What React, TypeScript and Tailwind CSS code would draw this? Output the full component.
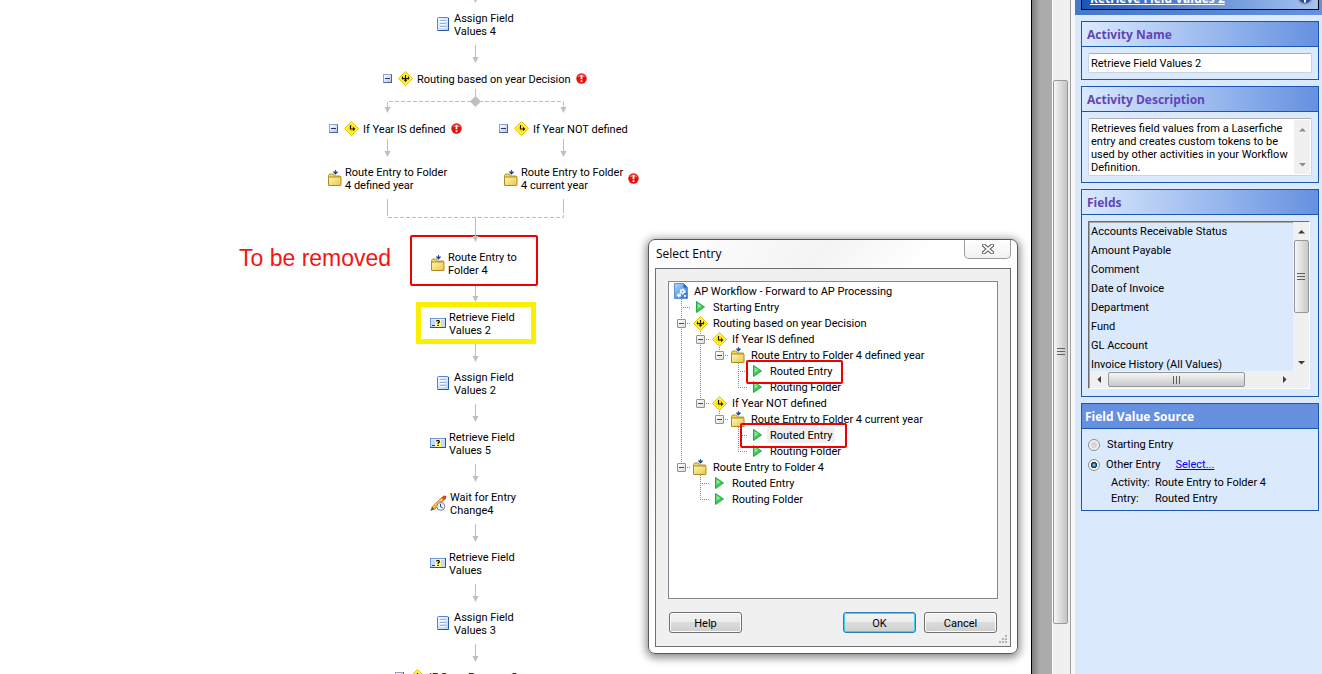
import type { ReactNode } from 'react';

function AssignIcon() {
  return (
    <svg width="14" height="15" viewBox="0 0 14 15" className="shrink-0">
      <defs>
        <linearGradient id="assign" x1="0" y1="0" x2="1" y2="1">
          <stop offset="0" stopColor="#f4faff" />
          <stop offset="1" stopColor="#b5d3f8" />
        </linearGradient>
      </defs>
      <rect x="0.5" y="0.5" width="11" height="13" rx="1" fill="url(#assign)" stroke="#5b86c4" />
      <path d="M0.5 13.500h11V1" stroke="#2f5a9e" fill="none" />
      <path d="M3 3.500h6M3 6.500h6M3 9.500h6" stroke="#8fb3e2" />
      <path d="M3.500 4.500h5M3.500 7.500h5M3.500 10.500h5" stroke="#fff" />
    </svg>
  );
}

function RetrieveIcon() {
  return (
    <svg width="16" height="10" viewBox="0 0 16 10" className="shrink-0">
      <rect x="0.5" y="0.5" width="15" height="9" fill="#c2dcfa" stroke="#6f9ad6" />
      <path d="M0 9.500h15.500V0" stroke="#2c529a" fill="none" />
      <path d="M1.500 1.500h13" stroke="#eaf4ff" />
      <path d="M2 7.500h3" stroke="#24407c" />
      <rect x="5" y="1" width="6" height="8" fill="#fff78a" />
      <path d="M6.500 3.400C6.600 2.200 9.400 2.100 9.300 3.600 9.200 4.500 8 4.500 8 5.800" stroke="#000" strokeWidth="1.200" fill="none" />
      <rect x="7.400" y="6.800" width="1.300" height="1.200" fill="#000" />
    </svg>
  );
}

function FolderIcon() {
  return (
    <svg width="14" height="16" viewBox="0 0 14 16" className="shrink-0">
      <defs>
        <linearGradient id="folder" x1="0" y1="0" x2="1" y2="1">
          <stop offset="0" stopColor="#fff7b0" />
          <stop offset="1" stopColor="#e6c84a" />
        </linearGradient>
      </defs>
      <path d="M0.500 5.500l1-1.500h4l1 2h6v9h-12z" fill="#f0d765" stroke="#b8932c" />
      <rect x="0.500" y="7" width="12.500" height="8.500" rx="0.500" fill="url(#folder)" stroke="#b08a20" />
      <path d="M7.500 0v2M5.500 1.500h1M8.500 1.500h1" stroke="#2850b0" />
      <path d="M5 2h5L7.500 4.800z" fill="#1c3f9c" />
    </svg>
  );
}

// Yellow road-sign diamond; `split` draws the three-way arrow of a decision
function SignIcon({ split = false }: { split?: boolean }) {
  return (
    <svg width="15" height="15" viewBox="0 0 15 15" className="shrink-0">
      <path d="M7.500 0.500l7 7-7 7-7-7z" fill="#ffee2e" stroke="#e6c800" />
      <path d="M7.500 2.500l5 5-5 5-5-5z" fill="#ffe100" stroke="#fff98c" strokeWidth="0.700" />
      {split ? (
        <>
          <path d="M7.500 4v6M4.500 5.500v2h6v-2" stroke="#1a1600" fill="none" />
          <path d="M5.500 8.500h4L7.500 11zM3.400 7.500L5 6.200v2.600zM11.600 7.500L10 6.200v2.600z" fill="#1a1600" />
        </>
      ) : (
        <>
          <path d="M6.500 4v4h3.500" stroke="#1a1600" strokeWidth="1.100" fill="none" />
          <path d="M9 5.800L11.400 8 9 10.200z" fill="#1a1600" />
        </>
      )}
    </svg>
  );
}

function WaitIcon() {
  return (
    <svg width="17" height="17" viewBox="0 0 17 17" className="shrink-0">
      <path d="M0.500 16l1.500-4.500 2.600 2.800z" fill="#6b4a2a" />
      <path d="M2 11.700L11.500 2.600l2.600 2.600-9.500 9.300z" fill="#f5a623" stroke="#c1660c" strokeWidth="0.600" />
      <path d="M3.200 12.200l9.200-8.800" stroke="#ffe08a" strokeWidth="1" />
      <path d="M11.500 2.600L13.800 0.600 16.300 1 16 3.400 14.100 5.200z" fill="#e2402c" />
      <circle cx="10.800" cy="11.400" r="4" fill="#eef2fa" stroke="#7587a8" />
      <path d="M10.500 8.800v3l2.200 1.200" stroke="#33415f" fill="none" />
    </svg>
  );
}

function WorkflowIcon() {
  return (
    <svg width="14" height="16" viewBox="0 0 14 16" className="shrink-0">
      <defs>
        <linearGradient id="page" x1="0" y1="0" x2="1" y2="1">
          <stop offset="0" stopColor="#b9d8fa" />
          <stop offset="0.600" stopColor="#5b9be6" />
          <stop offset="1" stopColor="#1d63c4" />
        </linearGradient>
      </defs>
      <path d="M0.500 0.500h9l4 4v11h-13z" fill="url(#page)" stroke="#5a93da" />
      <path d="M9.500 0.500v4h4z" fill="#1f5fbe" />
      <circle cx="8.500" cy="8.500" r="2.200" fill="#fff" stroke="#fff" strokeWidth="1.800" strokeDasharray="1.300 1" />
      <circle cx="8.500" cy="8.500" r="0.900" fill="#5b9be6" />
      <circle cx="5" cy="12.300" r="1.400" fill="#fff" stroke="#fff" strokeWidth="1.400" strokeDasharray="1 0.700" />
      <circle cx="11" cy="13" r="1.200" fill="#e6f1ff" />
    </svg>
  );
}

function PlayIcon() {
  return (
    <svg width="9" height="12" viewBox="0 0 9 12" className="shrink-0">
      <path d="M0.500 0.500L8.500 6 0.500 11.500z" fill="#3ccb58" stroke="#27a845" strokeLinejoin="round" />
      <path d="M1.500 2.300v5.500L5.500 5z" fill="#8ae89a" />
    </svg>
  );
}

function ErrorIcon() {
  return (
    <svg width="11" height="11" viewBox="0 0 11 11" className="shrink-0">
      <circle cx="5.500" cy="5.500" r="5.200" fill="#e3120b" />
      <path d="M1.500 4a4.300 4.300 0 018 0z" fill="#f4625a" />
      <path d="M5.500 2v4.200M5.500 7.300v1.600" stroke="#fff" strokeWidth="1.700" />
    </svg>
  );
}

function Collapse() {
  return (
    <button
      aria-label="Collapse"
      className="grid size-[9px] shrink-0 place-items-center border border-[#8ea0c4] border-b-[#4a6294] border-r-[#4a6294] bg-linear-to-br from-white to-[#b9c8e4]"
    >
      <span className="h-px w-[5px] bg-[#223a70]" />
    </button>
  );
}

/* ---------- workflow canvas ---------- */

const ARROWS = [
  [475, 45, 63],
  [387, 139, 157],
  [563, 139, 157],
  [475, 217, 242],
  [475, 286, 302],
  [475, 344, 362],
  [475, 404, 422],
  [475, 464, 482],
  [475, 524, 542],
  [475, 584, 602],
  [475, 644, 662],
  [475, -10, 3],
  [387, 106, 113],
  [563, 106, 113],
];

function Connectors() {
  return (
    <svg className="absolute inset-0 size-full" fill="none" stroke="#bfbfbf">
      {ARROWS.map(([x, from, to]) => (
        <g key={`${x}-${from}`}>
          <path d={`M${x + 0.5} ${from}V${to - 5}`} />
          <path d={`M${x - 2.5} ${to - 6}h6l-3 6z`} fill="#bfbfbf" stroke="none" />
        </g>
      ))}
      <path d="M475.500 89v8M387.500 199v13M563.500 199v13" />
      <path d="M387.500 106v-4.500h176v4.500M387.500 212v5.500h176V212" strokeDasharray="4 2" />
      <path d="M475.500 96l5.500 5.500-5.500 5.500-5.500-5.500z" fill="#bfbfbf" stroke="none" />
    </svg>
  );
}

function Node({ x, y, icon, lines, error }: { x: number; y: number; icon: ReactNode; lines: string[]; error?: boolean }) {
  return (
    <div className="absolute flex items-center gap-[3px] whitespace-nowrap leading-[13px]" style={{ left: x, top: y }}>
      <span className="pb-0.5">{icon}</span>
      <span>
        {lines.map((line) => (
          <span key={line} className="block">{line}</span>
        ))}
      </span>
      {error && <span className="pb-0.5 pl-0.5"><ErrorIcon /></span>}
    </div>
  );
}

function Branch({ x, y, label, split, error }: { x: number; y: number; label: string; split?: boolean; error?: boolean }) {
  return (
    <div className="absolute flex items-center gap-1 whitespace-nowrap leading-[13px]" style={{ left: x, top: y }}>
      <span className="pr-0.5"><Collapse /></span>
      <SignIcon split={split} />
      <span className="pt-0.5">{label}</span>
      {error && <span className="pl-px"><ErrorIcon /></span>}
    </div>
  );
}

function Canvas() {
  return (
    <main className="relative min-w-0 flex-1 overflow-hidden bg-white">
      <div className="absolute left-[416px] top-[302px] h-[42px] w-[120px] bg-[repeating-conic-gradient(#ffe600_0_25%,#fff500_0_50%)] bg-size-[2px_2px] p-[5px]">
        <div className="size-full bg-white" />
      </div>
      <div className="absolute left-[410px] top-[235px] h-[51px] w-[128px] rounded-xs border-2 border-[#f00000]" />
      <Connectors />

      <Node x={437} y={12} icon={<AssignIcon />} lines={['Assign Field', 'Values 4']} />
      <Branch x={383} y={71} label="Routing based on year Decision" split error />
      <Branch x={329} y={121} label="If Year IS defined" error />
      <Branch x={499} y={121} label="If Year NOT defined" />
      <Node x={328} y={166} icon={<FolderIcon />} lines={['Route Entry to Folder', '4 defined year']} />
      <Node x={504} y={166} icon={<FolderIcon />} lines={['Route Entry to Folder', '4 current year']} error />
      <Node x={431} y={251} icon={<FolderIcon />} lines={['Route Entry to', 'Folder 4']} />
      <Node x={430} y={311} icon={<RetrieveIcon />} lines={['Retrieve Field', 'Values 2']} />
      <Node x={437} y={371} icon={<AssignIcon />} lines={['Assign Field', 'Values 2']} />
      <Node x={430} y={431} icon={<RetrieveIcon />} lines={['Retrieve Field', 'Values 5']} />
      <Node x={430} y={491} icon={<WaitIcon />} lines={['Wait for Entry', 'Change4']} />
      <Node x={430} y={551} icon={<RetrieveIcon />} lines={['Retrieve Field', 'Values']} />
      <Node x={437} y={611} icon={<AssignIcon />} lines={['Assign Field', 'Values 3']} />
      <Branch x={395} y={669} label="IF Scan Process C" split />

      <p className="absolute left-[239px] top-[242px] whitespace-nowrap font-['Liberation_Sans',Arial,sans-serif] text-[23px] leading-8 text-[#f41414]">
        To be removed
      </p>
      <SelectEntryDialog />
    </main>
  );
}

/* ---------- select entry dialog ---------- */

type TreeRow = {
  label: string;
  icon: ReactNode;
  // one letter per column left of the icon: l(ine), t(ee), e(nd) or blank
  cols: string;
  open?: boolean;
  selected?: boolean;
};

const TREE: TreeRow[] = [
  { label: 'AP Workflow - Forward to AP Processing', icon: <WorkflowIcon />, cols: '' },
  { label: 'Starting Entry', icon: <PlayIcon />, cols: 't' },
  { label: 'Routing based on year Decision', icon: <SignIcon split />, cols: 't', open: true },
  { label: 'If Year IS defined', icon: <SignIcon />, cols: 'lt', open: true },
  { label: 'Route Entry to Folder 4 defined year', icon: <FolderIcon />, cols: 'lle', open: true },
  { label: 'Routed Entry', icon: <PlayIcon />, cols: 'll t' },
  { label: 'Routing Folder', icon: <PlayIcon />, cols: 'll e' },
  { label: 'If Year NOT defined', icon: <SignIcon />, cols: 'le', open: true },
  { label: 'Route Entry to Folder 4 current year', icon: <FolderIcon />, cols: 'l e', open: true },
  { label: 'Routed Entry', icon: <PlayIcon />, cols: 'l  t', selected: true },
  { label: 'Routing Folder', icon: <PlayIcon />, cols: 'l  e' },
  { label: 'Route Entry to Folder 4', icon: <FolderIcon />, cols: 'e', open: true },
  { label: 'Routed Entry', icon: <PlayIcon />, cols: ' t' },
  { label: 'Routing Folder', icon: <PlayIcon />, cols: ' e' },
];

function TreeCol({ kind, open }: { kind: string; open?: boolean }) {
  return (
    <span className="relative h-4 w-[19px] shrink-0">
      <svg width="19" height="16" className="block" stroke="#8a8a8a" strokeDasharray="1 1">
        {kind !== ' ' && <path d={kind === 'e' ? 'M9.500 0V8' : 'M9.500 0V16'} />}
        {(kind === 't' || kind === 'e') && <path d="M9 8.500H21" />}
      </svg>
      {open && (
        <button
          aria-label="Collapse"
          className="absolute left-[5px] top-1 grid size-[9px] place-items-center rounded-[1px] border border-[#919191] bg-linear-to-br from-white to-[#dedede]"
        >
          <span className="h-px w-[5px] bg-[#2c4a9a]" />
        </button>
      )}
    </span>
  );
}

function EntryTree() {
  return (
    <div className="relative min-h-0 flex-1 border border-[#828790] bg-white pl-[3px] pt-px">
      <ul>
        {TREE.map((row, i) => {
          const last = row.cols.length - 1;
          return (
            <li key={i} className="flex h-4 items-center whitespace-nowrap">
              {row.cols.split('').map((kind, c) => (
                <TreeCol key={c} kind={kind} open={row.open && c === last} />
              ))}
              <span className="grid w-[19px] shrink-0 place-items-center pr-px">{row.icon}</span>
              <span className={`h-4 px-[3px] leading-[18px] ${row.selected ? 'bg-[#f0f0f0]' : ''}`}>{row.label}</span>
            </li>
          );
        })}
      </ul>
      <div className="absolute left-[77px] top-[78px] h-6 w-[97px] rounded-xs border-2 border-[#f00000]" />
      <div className="absolute left-[71px] top-[141px] h-[25px] w-[107px] rounded-xs border-2 border-[#f00000]" />
    </div>
  );
}

function DialogButton({ children, primary }: { children: ReactNode; primary?: boolean }) {
  return (
    <button
      className={`h-[21px] w-[73px] rounded-[3px] border bg-[linear-gradient(#f3f3f3,#ebebeb_50%,#dcdcdc_50%,#cfcfcf)] pt-px leading-none ${
        primary
          ? 'border-[#2c7fb5] shadow-[inset_0_0_0_1px_#45cdf5]'
          : 'border-[#707070] shadow-[inset_0_0_0_1px_#fcfcfc]'
      }`}
    >
      {children}
    </button>
  );
}

function SelectEntryDialog() {
  return (
    <div
      role="dialog"
      aria-label="Select Entry"
      className="absolute left-[648px] top-[239px] flex h-[415px] w-[370px] flex-col rounded-[7px] border border-[#55585c] bg-linear-to-br from-white via-[#f4f4f4] via-25% to-white to-40% px-1.5 pb-1.5 shadow-[0_2px_9px_2px_rgba(0,0,0,0.45)]"
    >
      <div className="flex h-7 shrink-0 items-start justify-between">
        <h2 className="pl-px pt-[5px] font-['Open_Sans','Noto_Sans',sans-serif] text-xs leading-[18px]">Select Entry</h2>
        <button
          aria-label="Close"
          className="grid h-[19px] w-[47px] place-items-center rounded-b-[5px] border border-t-0 border-[#9a9c9f] bg-linear-to-b from-white to-[#f2f2f2]"
        >
          <svg width="12" height="10" viewBox="0 0 12 10" fill="none">
            <path d="M2 1.500l8 7M10 1.500l-8 7" stroke="#55565c" strokeWidth="3.800" strokeLinecap="square" />
            <path d="M2 1.500l8 7M10 1.500l-8 7" stroke="#fff" strokeWidth="1.800" strokeLinecap="square" />
          </svg>
        </button>
      </div>
      <div className="relative flex min-h-0 flex-1 flex-col border border-[#6d6f73] bg-[#f0f0f0] p-3">
        <EntryTree />
        <div className="flex gap-2 px-px pb-px pt-[13px]">
          <DialogButton>Help</DialogButton>
          <span className="flex-1" />
          <DialogButton primary>OK</DialogButton>
          <DialogButton>Cancel</DialogButton>
        </div>
        <svg width="9" height="9" className="absolute bottom-0.5 right-0.5" fill="#b4b4b4">
          <path d="M6 0h2v2H6zM3 3h2v2H3zM6 3h2v2H6zM0 6h2v2H0zM3 6h2v2H3zM6 6h2v2H6z" />
        </svg>
      </div>
    </div>
  );
}

/* ---------- properties panel ---------- */

function Arrow({ dir, muted }: { dir: 'up' | 'down' | 'left' | 'right'; muted?: boolean }) {
  const d = { up: 'M0 5.500h7L3.500 2z', down: 'M0 2h7L3.500 5.500z', left: 'M5 0v7L1.500 3.500z', right: 'M2 0v7L5.500 3.500z' }[dir];
  return (
    <svg width="7" height="7" viewBox="0 0 7 7" className="shrink-0">
      <path d={d} fill={muted ? '#8d8d8d' : '#3c3c3c'} />
    </svg>
  );
}

function Grip({ vertical }: { vertical?: boolean }) {
  return (
    <svg width="8" height="8" viewBox="0 0 8 8" stroke="#5f6165">
      <path d={vertical ? 'M0 0.500h8M0 3.500h8M0 6.500h8' : 'M0.500 0v8M3.500 0v8M6.500 0v8'} />
    </svg>
  );
}

function Section({ title, solid, children }: { title: string; solid?: boolean; children: ReactNode }) {
  return (
    <section className="border border-[#1c56b4]">
      <h3
        className={`h-[25px] border-b border-[#1c56b4] font-['Open_Sans','Noto_Sans',sans-serif] text-xs font-bold leading-[26px] ${
          solid ? 'bg-[#6691e0] pl-[3px] text-white' : 'bg-linear-to-r from-[#dbe9fd] to-[#6691e0] pl-[5px] text-[#5f45b5]'
        }`}
      >
        {title}
      </h3>
      {children}
    </section>
  );
}

const FIELDS = [
  'Accounts Receivable Status',
  'Amount Payable',
  'Comment',
  'Date of Invoice',
  'Department',
  'Fund',
  'GL Account',
  'Invoice History (All Values)',
];

function FieldList() {
  return (
    <div className="mb-[7px] ml-1.5 mr-2 mt-1.5 grid h-[168px] grid-cols-[1fr_16px] grid-rows-[1fr_17px] border border-b-white border-l-[#6d6d6d] border-r-white border-t-[#6d6d6d]">
      <ul className="overflow-hidden border-l border-t border-[#a8a8a8] pl-px">
        {FIELDS.map((field) => (
          <li key={field} className="h-[19px] whitespace-nowrap leading-[17px]">{field}</li>
        ))}
      </ul>
      <div className="flex flex-col items-center bg-[#f0f0f0]">
        <span className="grid h-[18px] place-items-center"><Arrow dir="up" /></span>
        <span className="grid h-[73px] w-[15px] place-items-center rounded-xs border border-[#979797] bg-linear-to-r from-[#f5f5f5] to-[#c9c9cd]">
          <Grip vertical />
        </span>
        <span className="flex-1" />
        <span className="grid h-[17px] place-items-center"><Arrow dir="down" /></span>
      </div>
      <div className="flex items-center border-l border-[#a8a8a8] bg-[#f0f0f0]">
        <span className="grid w-[18px] place-items-center"><Arrow dir="left" /></span>
        <span className="grid h-[15px] w-[137px] place-items-center rounded-xs border border-[#979797] bg-linear-to-b from-[#f5f5f5] to-[#c9c9cd]">
          <Grip />
        </span>
        <span className="flex-1" />
        <span className="grid w-[18px] place-items-center"><Arrow dir="right" /></span>
      </div>
      <div className="bg-[#f0f0f0]" />
    </div>
  );
}

const RADIO =
  'size-3 shrink-0 appearance-none rounded-full border border-[#8e8f8f] bg-[radial-gradient(circle,#d6d6d6_0_35%,#f4f4f4_60%)] checked:bg-[radial-gradient(circle_at_50%_50%,#6cc6ee_0_8%,#15496b_32%,#0c2c45_40%,#f4f4f4_50%)]';

function PropertiesPanel() {
  return (
    <aside className="flex w-[247px] shrink-0 flex-col overflow-hidden bg-[#dbe9fd]">
      <div className="h-[15px] shrink-0 overflow-hidden bg-linear-to-r from-[#4577cb] to-[#6691e0] pl-1.5 pr-[3px]">
        <div className="-mt-4 flex h-[26px] items-center justify-between border border-black bg-linear-to-r from-[#1c55b5] to-[#a5c3f0] pl-2 pr-1">
          <a
            href="#activity"
            className="pt-1 font-['Open_Sans','Noto_Sans',sans-serif] text-xs font-bold leading-4 text-white underline"
          >
            Retrieve Field Values 2
          </a>
          <svg width="18" height="18" viewBox="0 0 18 18" className="shrink-0">
            <circle cx="9" cy="9" r="7.500" fill="#2450b4" stroke="#a3a8b3" strokeWidth="2" />
            <path d="M9 4v2M9 7.500v7" stroke="#fff" strokeWidth="2" />
          </svg>
        </div>
      </div>

      <div className="flex flex-col gap-1.5 pl-1.5 pr-[3px] pt-1.5">
        <Section title="Activity Name">
          <div className="p-1.5">
            <input
              aria-label="Activity Name"
              defaultValue="Retrieve Field Values 2"
              className="block h-5 w-full rounded-xs border border-[#c9d3e3] border-t-[#abadb3] bg-white px-0.5 outline-none"
            />
          </div>
        </Section>

        <Section title="Activity Description">
          <div className="p-1.5">
            <div className="flex h-[58px] rounded-xs border border-[#c9d3e3] border-t-[#abadb3] bg-white p-px">
              <textarea
                aria-label="Activity Description"
                defaultValue="Retrieves field values from a Laserfiche entry and creates custom tokens to be used by other activities in your Workflow Definition."
                className="min-w-0 flex-1 resize-none overflow-hidden px-px pt-0.5 leading-[13px] outline-none"
              />
              <div className="flex w-4 flex-col items-center justify-between bg-[#f0f0f0] py-1.5">
                <Arrow dir="up" muted />
                <Arrow dir="down" muted />
              </div>
            </div>
          </div>
        </Section>

        <Section title="Fields">
          <FieldList />
        </Section>

        <Section title="Field Value Source" solid>
          <div className="pb-[3px] pl-1.5 pt-1.5">
            <label className="flex h-[19px] items-center gap-[7px]">
              <input type="radio" name="source" className={RADIO} />
              <span className="pt-px">Starting Entry</span>
            </label>
            <div className="flex h-[21px] items-center">
              <label className="flex items-center gap-1.5">
                <input type="radio" name="source" defaultChecked className={RADIO} />
                <span className="pt-px">Other Entry</span>
              </label>
              <a href="#select" className="pl-[15px] pt-px text-[#0000ff] underline">Select...</a>
            </div>
            <dl className="grid grid-cols-[44px_1fr] pl-[23px] leading-4">
              <dt>Activity:</dt>
              <dd>Route Entry to Folder 4</dd>
              <dt>Entry:</dt>
              <dd>Routed Entry</dd>
            </dl>
          </div>
        </Section>
      </div>
    </aside>
  );
}

export default function App() {
  return (
    <div className="flex h-screen overflow-hidden bg-white font-[Roboto,'Liberation_Sans',sans-serif] text-[11px] text-black">
      <Canvas />
      <div className="w-[21px] shrink-0 border-l border-black bg-linear-to-r from-[#7e7e7e] to-[#ababab] to-40%" />
      <div className="flex w-[18px] shrink-0 flex-col border-l border-white bg-[#f0f0f0] pr-0.5 pt-20">
        <div className="grid h-[544px] place-items-center rounded-xs border border-[#979797] bg-linear-to-r from-[#f5f5f5] to-[#c4c4c8]">
          <Grip vertical />
        </div>
      </div>
      <div className="w-[5px] shrink-0 border-l border-[#a0a0a0] bg-[#f8f8f8]" />
      <PropertiesPanel />
    </div>
  );
}
